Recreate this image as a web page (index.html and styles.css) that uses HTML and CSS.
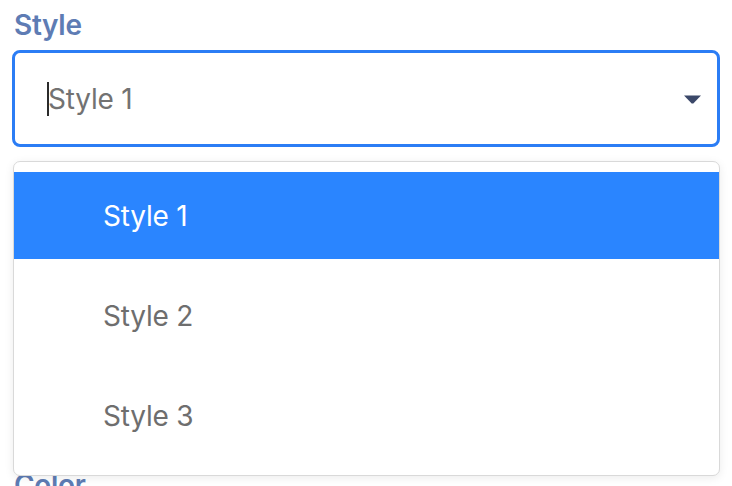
FILE: index.html
```html
<!DOCTYPE html>
<html>
<head>
<meta charset="utf-8">
<link rel="stylesheet" href="styles.css">
</head>
<body>
<div class="panel">
  <div class="field">
    <div class="label">Style</div>
    <div class="select">
      <span class="caret"></span>
      <span class="value">Style 1</span>
      <svg class="arrow" width="17" height="9" viewBox="0 0 17 9"><path d="M0 0.5 L17 0.5 L9.3 8.5 L7.7 8.5 Z" fill="#3b4869"/></svg>
    </div>
  </div>
  <div class="field field-color">
    <div class="label">Color</div>
  </div>
  <ul class="menu">
    <li class="item active">Style 1</li>
    <li class="item">Style 2</li>
    <li class="item">Style 3</li>
  </ul>
</div>
</body>
</html>
```

FILE: styles.css
```css
html, body {
  margin: 0;
  padding: 0;
  background: #ffffff;
  font-family: Inter, "Noto Sans", sans-serif;
}
.panel {
  position: relative;
  width: 732px;
  height: 486px;
  overflow: hidden;
  padding: 0 12px 0 12px;
  box-sizing: border-box;
}
.field {
  display: flex;
  flex-direction: column;
}
.label {
  color: #5e7cb4;
  font-size: 28px;
  font-weight: 600;
  line-height: 34px;
  height: 42px;
  padding-left: 2px;
  padding-top: 8px;
  letter-spacing: -0.3px;
}
.select {
  height: 97px;
  box-sizing: border-box;
  border: 3px solid #2b7df5;
  border-radius: 8px;
  display: flex;
  align-items: center;
  padding: 0 16px 0 32px;
  position: relative;
}
.caret {
  width: 2px;
  height: 34px;
  background: #2b2b2b;
}
.value {
  flex: 1;
  color: #727272;
  font-size: 28px;
  font-weight: 400;
  margin-left: -1px;
  letter-spacing: -0.2px;
}
.arrow {
  display: block;
  margin-top: 2px;
}
.field-color {
  margin-top: 313px;
}
.menu {
  position: absolute;
  left: 13px;
  top: 161px;
  width: 707px;
  height: 315px;
  box-sizing: border-box;
  margin: 0;
  padding: 10px 0 0 0;
  list-style: none;
  background: #ffffff;
  border: 1px solid #d9d9d9;
  border-radius: 7px;
  box-shadow: 0 2px 10px rgba(0, 0, 0, 0.08);
  display: flex;
  flex-direction: column;
  gap: 13px;
}
.item {
  height: 87px;
  display: flex;
  align-items: center;
  padding-left: 89px;
  font-size: 28px;
  color: #6e6e6e;
  letter-spacing: -0.2px;
}
.item.active {
  background: #2a85ff;
  color: #ffffff;
}
```
